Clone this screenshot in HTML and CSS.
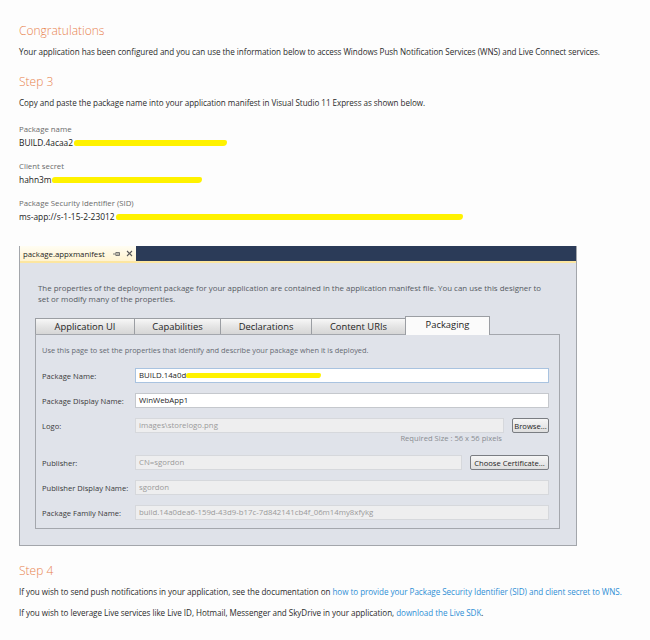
FILE: index.html
```html
<!DOCTYPE html>
<html>
<head>
<meta charset="utf-8">
<link rel="stylesheet" href="styles.css">
</head>
<body>
<div class="page">
  <h1 class="heading first">Congratulations</h1>
  <p class="para p-intro">Your application has been configured and you can use the information below to access Windows Push Notification Services (WNS) and Live Connect services.</p>

  <h1 class="heading step3">Step 3</h1>
  <p class="para p-copy">Copy and paste the package name into your application manifest in Visual Studio 11 Express as shown below.</p>

  <div class="field">
    <div class="field-label">Package name</div>
    <div class="field-value">BUILD.4acaa2<span class="scribble s-name"></span></div>
  </div>
  <div class="field">
    <div class="field-label">Client secret</div>
    <div class="field-value">hahn3m<span class="scribble s-secret"></span></div>
  </div>
  <div class="field">
    <div class="field-label">Package Security Identifier (SID)</div>
    <div class="field-value">ms-app://s-1-15-2-23012<span class="scribble s-sid"></span></div>
  </div>

  <div class="vs">
    <div class="vs-bar">
      <div class="vs-doctab">
        <span>package.appxmanifest</span>
        <svg class="pin" width="8" height="6" viewBox="0 0 8 6"><path d="M0 3h3M3 1v4M3 1.5h3.5v3H3M4 3h2.5" fill="none" stroke="#6a6a6a" stroke-width="0.9"/></svg>
        <svg class="close" width="7" height="7" viewBox="0 0 7 7"><path d="M1 1l5 5M6 1l-5 5" stroke="#5a5a5a" stroke-width="1.1"/></svg>
      </div>
    </div>
    <div class="vs-accent"></div>
    <div class="vs-body">
      <p class="vs-desc">The properties of the deployment package for your application are contained in the application manifest file. You can use this designer to set or modify many of the properties.</p>
      <div class="tabs">
        <div class="tab t1">Application UI</div>
        <div class="tab t2">Capabilities</div>
        <div class="tab t3">Declarations</div>
        <div class="tab t4">Content URIs</div>
        <div class="tab active t5">Packaging</div>
      </div>
      <div class="panel">
        <p class="panel-desc">Use this page to set the properties that identify and describe your package when it is deployed.</p>
        <div class="form">
          <div class="row">
            <span class="lbl">Package Name:</span>
            <div class="input focus">BUILD.14a0d<span class="scribble s-input"></span></div>
          </div>
          <div class="row">
            <span class="lbl">Package Display Name:</span>
            <div class="input">WinWebApp1</div>
          </div>
          <div class="row">
            <span class="lbl">Logo:</span>
            <div class="with-btn">
              <div class="input disabled grow">images\storelogo.png</div>
              <button class="btn btn-browse">Browse...</button>
            </div>
          </div>
          <div class="hint-row"><span class="hint">Required Size : 56 x 56 pixels</span></div>
          <div class="row">
            <span class="lbl">Publisher:</span>
            <div class="with-btn">
              <div class="input disabled grow">CN=sgordon</div>
              <button class="btn btn-cert">Choose Certificate...</button>
            </div>
          </div>
          <div class="row">
            <span class="lbl">Publisher Display Name:</span>
            <div class="input disabled">sgordon</div>
          </div>
          <div class="row">
            <span class="lbl">Package Family Name:</span>
            <div class="input disabled">build.14a0dea6-159d-43d9-b17c-7d842141cb4f_06m14my8xfykg</div>
          </div>
        </div>
      </div>
    </div>
  </div>

  <h1 class="heading step4">Step 4</h1>
  <p class="para p-s4a">If you wish to send push notifications in your application, see the documentation on <a href="#" class="link">how to provide your Package Security Identifier (SID) and client secret to WNS.</a></p>
  <p class="para p-s4b">If you wish to leverage Live services like Live ID, Hotmail, Messenger and SkyDrive in your application, <a href="#" class="link">download the Live SDK</a>.</p>
</div>
</body>
</html>
```

FILE: styles.css
```css
html, body {
  margin: 0;
  padding: 0;
  background: #fdfdfd;
}
body {
  font-family: "Open Sans", "Noto Sans", sans-serif;
  color: #2b2b2b;
}
.page {
  padding: 22px 0 0 19px;
  width: 631px;
}
.heading {
  margin: 0;
  font-size: 12px;
  font-weight: 300;
  line-height: 18px;
  color: #e8834f;
}
.heading.step3 { margin-top: 15px; }
.heading.step4 { margin-top: 16px; }
.para {
  margin: 0;
  font-size: 8.1px;
  line-height: 12px;
  letter-spacing: -0.05px;
  white-space: nowrap;
}
.p-intro { margin-top: 6px; }
.p-copy { margin-top: 6px; }
.p-s4a { margin-top: 6px; }
.p-s4b { margin-top: 9px; }
.link { color: #2f8fd5; text-decoration: none; }

.field { margin-top: 11px; }
.field:first-of-type { margin-top: 14px; }
.field-label {
  font-size: 7.8px;
  line-height: 12px;
  color: #6a6a6a;
}
.field-value {
  margin-top: 2px;
  font-size: 8.4px;
  line-height: 12px;
  color: #222;
  display: flex;
  align-items: center;
}
.scribble {
  display: inline-block;
  height: 6px;
  background: #fff200;
  border-radius: 3px 2px 4px 2px;
}
.s-name { width: 153px; margin-left: 1px; }
.s-secret { width: 150px; margin-left: 0; }
.s-sid { width: 347px; margin-left: 1px; }
.s-input { width: 135px; height: 5px; }

/* Visual Studio screenshot */
.vs {
  margin-top: 23px;
  width: 556px;
  border: 1px solid #a3a6ab;
  border-top: none;
  background: #dfe2e9;
}
.vs-bar {
  height: 15px;
  background: #2b3b58;
  display: flex;
}
.vs-doctab {
  width: 116px;
  height: 15px;
  box-sizing: border-box;
  background: linear-gradient(#fffdf3, #fff3cf);
  display: flex;
  align-items: center;
  padding-left: 3px;
  font-size: 7.8px;
  color: #1e1e1e;
  gap: 5px;
}
.vs-doctab .pin { margin-left: 3px; }
.vs-accent {
  height: 2px;
  background: #fce6a0;
}
.vs-body {
  padding: 20px 16px 16px 15px;
}
.vs-desc {
  margin: 0 0 0 3px;
  font-size: 7.9px;
  line-height: 11px;
  color: #555a62;
  width: 512px;
}
.tabs {
  display: flex;
  align-items: flex-end;
  margin-top: 11px;
  height: 18px;
}
.tab {
  height: 16px;
  box-sizing: border-box;
  border: 1px solid #9b9ea3;
  border-bottom: none;
  margin-right: -1px;
  background: linear-gradient(#f7f7f7, #e3e3e3 55%, #d6d6d6);
  font-size: 9.4px;
  line-height: 15px;
  text-align: center;
  color: #1e1e1e;
}
.t1 { width: 100px; }
.t2 { width: 87px; }
.t3 { width: 92px; }
.t4 { width: 95px; }
.t5 { width: 85px; }
.tab.active {
  background: #fbfbfb;
  position: relative;
  z-index: 1;
  margin-bottom: -1px;
  height: 19px;
  line-height: 15px;
}
.panel {
  border: 1px solid #a4a7ad;
  background: #e0e3ea;
  padding: 9px 10px 8px 6px;
}
.panel-desc {
  margin: 0;
  font-size: 7.4px;
  line-height: 12px;
  color: #656a72;
}
.form { margin-top: 12px; }
.row {
  display: grid;
  grid-template-columns: 93px 1fr;
  align-items: center;
  height: 15px;
  margin-bottom: 10px;
}
.lbl {
  font-size: 7.6px;
  color: #3a3a3a;
  white-space: nowrap;
}
.input {
  height: 15px;
  box-sizing: border-box;
  border: 1px solid #c5c8cd;
  background: #ffffff;
  font-size: 7.8px;
  line-height: 13px;
  padding-left: 3px;
  color: #1e1e1e;
  display: flex;
  align-items: center;
  white-space: nowrap;
  overflow: hidden;
}
.input.focus { border-color: #a9c3e0; }
.input.disabled {
  background: #eeeeef;
  border-color: #d6d8dc;
  color: #9a9a9a;
}
.with-btn {
  display: flex;
  align-items: center;
  gap: 8px;
}
.grow { flex: 1; }
.btn {
  height: 15px;
  box-sizing: border-box;
  border: 1px solid #7a7d82;
  border-radius: 2px;
  background: linear-gradient(#f6f6f6, #dedede);
  font-family: "Open Sans", "Noto Sans", sans-serif;
  font-size: 7.6px;
  line-height: 12px;
  padding: 0 1px;
  color: #1e1e1e;
  white-space: nowrap;
}
.btn-browse { width: 37px; }
.btn-cert { width: 79px; }
.hint-row {
  margin-top: -10px;
  height: 10px;
  margin-bottom: 12px;
  width: 460px;
  text-align: right;
  font-size: 7.6px;
  line-height: 10px;
  color: #8a8d92;
}
.row:last-child { margin-bottom: 0; }
```
